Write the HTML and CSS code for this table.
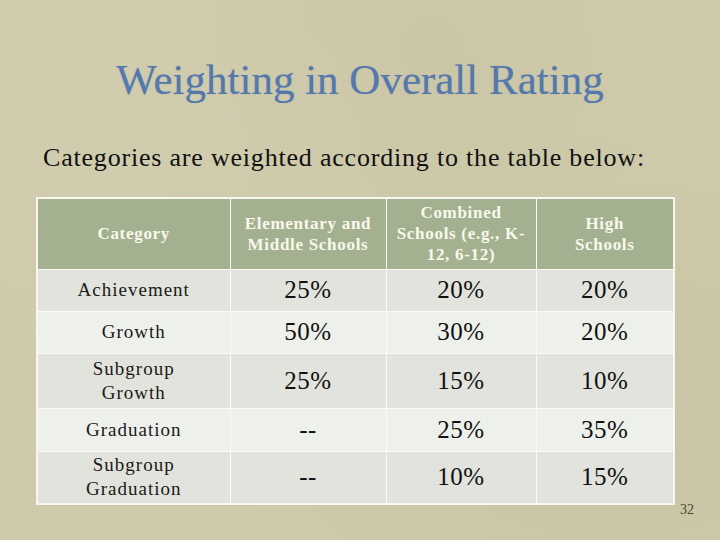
FILE: index.html
```html
<!DOCTYPE html>
<html>
<head>
<meta charset="utf-8">
<link rel="stylesheet" href="styles.css">
</head>
<body>
<div class="slide">
  <h1 class="title">Weighting in Overall Rating</h1>
  <p class="lead">Categories are weighted according to the table below:</p>
  <table class="weights">
    <colgroup>
      <col class="c1"><col class="c2"><col class="c3"><col class="c4">
    </colgroup>
    <thead>
      <tr class="head">
        <th>Category</th>
        <th>Elementary and<br>Middle Schools</th>
        <th>Combined<br>Schools (e.g., K-<br>12, 6-12)</th>
        <th>High<br>Schools</th>
      </tr>
    </thead>
    <tbody>
      <tr class="odd r1"><td class="cat">Achievement</td><td>25%</td><td>20%</td><td>20%</td></tr>
      <tr class="even r2"><td class="cat">Growth</td><td>50%</td><td>30%</td><td>20%</td></tr>
      <tr class="odd r3"><td class="cat">Subgroup<br>Growth</td><td>25%</td><td>15%</td><td>10%</td></tr>
      <tr class="even r4"><td class="cat">Graduation</td><td>--</td><td>25%</td><td>35%</td></tr>
      <tr class="odd r5"><td class="cat">Subgroup<br>Graduation</td><td>--</td><td>10%</td><td>15%</td></tr>
    </tbody>
  </table>
  <div class="pagenum">32</div>
</div>
</body>
</html>
```

FILE: styles.css
```css
html, body {
  margin: 0;
  padding: 0;
}
body {
  width: 720px;
  height: 540px;
  overflow: hidden;
  background-color: #cecaaa;
  background-image:
    radial-gradient(ellipse at 15% 25%, rgba(255,255,255,0.05), transparent 45%),
    radial-gradient(ellipse at 85% 75%, rgba(0,0,0,0.03), transparent 50%),
    radial-gradient(ellipse at 60% 10%, rgba(0,0,0,0.02), transparent 40%);
  font-family: "Liberation Serif", "DejaVu Serif", serif;
}
.slide {
  position: relative;
  width: 720px;
  height: 540px;
  display: flex;
  flex-direction: column;
}
.title {
  margin: 54px 0 0 0;
  text-align: center;
  font-weight: normal;
  font-size: 43px;
  line-height: 52px;
  color: #5579ac;
  text-shadow: 0 0 1px rgba(80,110,160,0.4);
}
.lead {
  margin: 37px 0 0 43px;
  font-size: 26px;
  line-height: 30px;
  letter-spacing: 0.8px;
  color: #111;
}
.weights {
  margin: 24px 0 0 36px;
  width: 637px;
  border-collapse: collapse;
  border: 2px solid #f8f8f0;
  table-layout: fixed;
}
.c1 { width: 193px; }
.c2 { width: 156px; }
.c3 { width: 150px; }
.c4 { width: 138px; }
.weights th, .weights td {
  border: 1px solid #fbfbf6;
  text-align: center;
  vertical-align: middle;
  padding: 0 2px;
  font-family: "Liberation Serif", "DejaVu Serif", serif;
}
.head { height: 71px; background: #a4b190; }
.head th {
  color: #f8f8ec;
  font-weight: bold;
  font-size: 17px;
  line-height: 21px;
  letter-spacing: 0.7px;
}
.odd { background: #e1e3dc; }
.even { background: #eef0eb; }
.r1 { height: 42px; }
.r2 { height: 42px; }
.r3 { height: 55px; }
.r4 { height: 43px; }
.r5 { height: 53px; }
.weights td {
  font-size: 25px;
  letter-spacing: 0.5px;
  color: #111;
}
.weights td.cat {
  font-size: 19px;
  line-height: 24px;
  letter-spacing: 1px;
  color: #1a1a1a;
}
.pagenum {
  position: absolute;
  left: 680px;
  top: 502px;
  font-size: 14px;
  color: #4a4a2c;
}
```
